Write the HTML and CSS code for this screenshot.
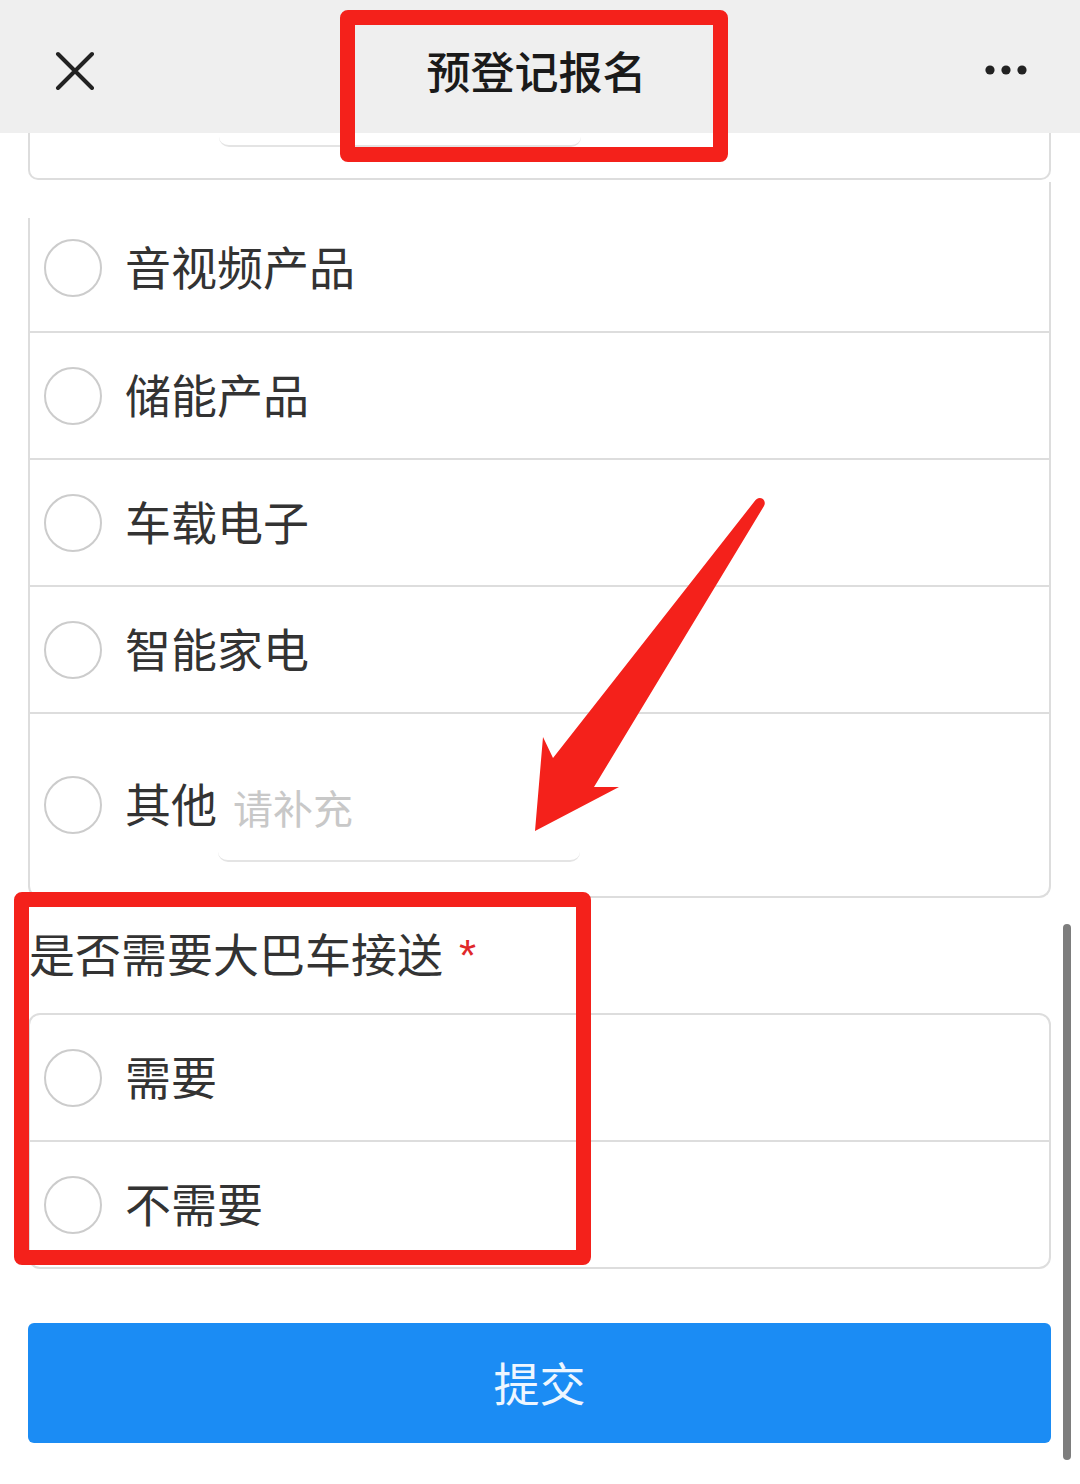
FILE: index.html
```html
<!DOCTYPE html>
<html lang="zh-CN">
<head>
<meta charset="utf-8">
<title>预登记报名</title>
<link rel="stylesheet" href="styles.css">
</head>
<body>

<div class="topbar">
	<svg class="close_icon" width="40" height="40" viewBox="0 0 40 40">
		<path d="M3 4 L37 38 M37 4 L3 38" stroke="#222" stroke-width="4" stroke-linecap="round" fill="none"/>
	</svg>
	<div class="title">预登记报名</div>
	<svg class="more_icon" width="44" height="12" viewBox="0 0 44 12">
		<circle cx="6" cy="6" r="4.6" fill="#222"/>
		<circle cx="22" cy="6" r="4.6" fill="#222"/>
		<circle cx="38" cy="6" r="4.6" fill="#222"/>
	</svg>
</div>

<div class="form">

	<!-- end of the previous question, scrolled under the top bar -->
	<div class="card card_tail">
		<div class="tail_input"></div>
	</div>

	<div class="card card_options">
		<div class="gap_cover"></div>
		<label class="option first_option"><span class="radio"></span><span>音视频产品</span></label>
		<label class="option"><span class="radio"></span><span>储能产品</span></label>
		<label class="option"><span class="radio"></span><span>车载电子</span></label>
		<label class="option"><span class="radio"></span><span>智能家电</span></label>
		<label class="option other_option">
			<span class="radio"></span><span>其他</span>
			<input class="other_input" type="text" placeholder="请补充">
		</label>
	</div>

	<div class="question">是否需要大巴车接送<span class="required">*</span></div>

	<div class="card card_bus">
		<label class="option"><span class="radio"></span><span>需要</span></label>
		<label class="option last_option"><span class="radio"></span><span>不需要</span></label>
	</div>

	<button class="submit_button">提交</button>
</div>

<div class="scrollbar"></div>

<!-- annotations drawn over the screenshot -->
<div class="mark mark_title"></div>
<div class="mark mark_bus"></div>
<svg class="arrow" width="1080" height="1484" viewBox="0 0 1080 1484">
	<path d="M754 502 Q758 496 763 499 Q766 502 764 506 L594 787 L619 787 L535 831 L543 737 L553 758 Z" fill="#f4211b"/>
</svg>

</body>
</html>
```

FILE: styles.css
```css
* {
box-sizing: border-box;
}

html, body {
margin: 0;
padding: 0;
}

body {
position: relative;
width: 1080px;
min-height: 1484px;
background: #ffffff;
color: #333333;
font-family: "Noto Sans CJK SC", "Noto Sans", sans-serif;
overflow: hidden;
}


/* top bar */


.topbar {
height: 133px;
background-color: #efefef;
display: flex;
align-items: center;
padding-top: 6px;
}

.close_icon {
margin-left: 55px;
}

.title {
flex: 1;
text-align: center;
font-size: 44px;
font-weight: 500;
color: #1a1a1a;
padding-right: 6px;
}

.more_icon {
margin-right: 52px;
}


/* form */


.form {
padding: 0 29px 0 28px;
}

.card {
border: 2px solid #dddddd;
background: #ffffff;
}

.card_tail {
height: 47px;
border-top: none;
border-radius: 0 0 10px 10px;
}

.tail_input {
margin-left: 189px;
width: 362px;
height: 14px;
border-bottom: 2px solid #e4e4e4;
border-radius: 0 0 10px 10px;
}

.card_options {
margin-top: 2px;
border-top: none;
border-radius: 0 0 12px 12px;
}

/* hides the left border above the first option, like in the capture */
.gap_cover {
height: 36px;
margin-left: -2px;
width: 10px;
background: #ffffff;
}

.option {
display: flex;
align-items: center;
height: 127px;
padding-left: 14px;
border-bottom: 2px solid #dddddd;
font-size: 46px;
color: #333333;
}

.first_option {
height: 115px;
padding-bottom: 14px;
}

.other_option {
height: 182px;
border-bottom: none;
}

.last_option {
height: 125px;
border-bottom: none;
}

.option > span:nth-child(2) {
margin-top: -6px;
}

.radio {
width: 58px;
height: 58px;
border: 2px solid #cccccc;
border-radius: 50%;
margin-right: 23px;
flex-shrink: 0;
}

.other_input {
align-self: flex-end;
margin: 0 0 34px 1px;
width: 362px;
height: 100px;
padding: 0 0 8px 15px;
border: none;
border-bottom: 2px solid #e4e4e4;
border-radius: 0 0 10px 10px;
background: transparent;
outline: none;
font-family: "Noto Sans CJK SC", "Noto Sans", sans-serif;
font-size: 40px;
color: #333333;
}

.other_input::placeholder {
color: #c8c8c8;
}

.question {
height: 115px;
display: flex;
align-items: center;
padding-left: 1px;
padding-bottom: 8px;
font-size: 46px;
color: #333333;
}

.required {
margin-left: 16px;
margin-top: 8px;
color: #e0282a;
font-family: "Liberation Sans", sans-serif;
font-size: 44px;
}

.card_bus {
border-radius: 12px;
}

.submit_button {
display: block;
width: 100%;
height: 120px;
margin-top: 54px;
border: none;
border-radius: 6px;
background-color: #1b8cf4;
color: #eef6ff;
font-family: "Noto Sans CJK SC", "Noto Sans", sans-serif;
font-size: 46px;
padding-bottom: 6px;
}

.scrollbar {
position: absolute;
right: 9px;
top: 924px;
width: 8px;
height: 536px;
border-radius: 4px;
background-color: #7d7d7d;
}


/* red annotations */


.mark {
position: absolute;
border: 15px solid #f4211b;
border-radius: 8px;
}

.mark_title {
left: 340px;
top: 10px;
width: 388px;
height: 152px;
}

.mark_bus {
left: 14px;
top: 892px;
width: 577px;
height: 373px;
}

.arrow {
position: absolute;
left: 0;
top: 0;
pointer-events: none;
}
```
